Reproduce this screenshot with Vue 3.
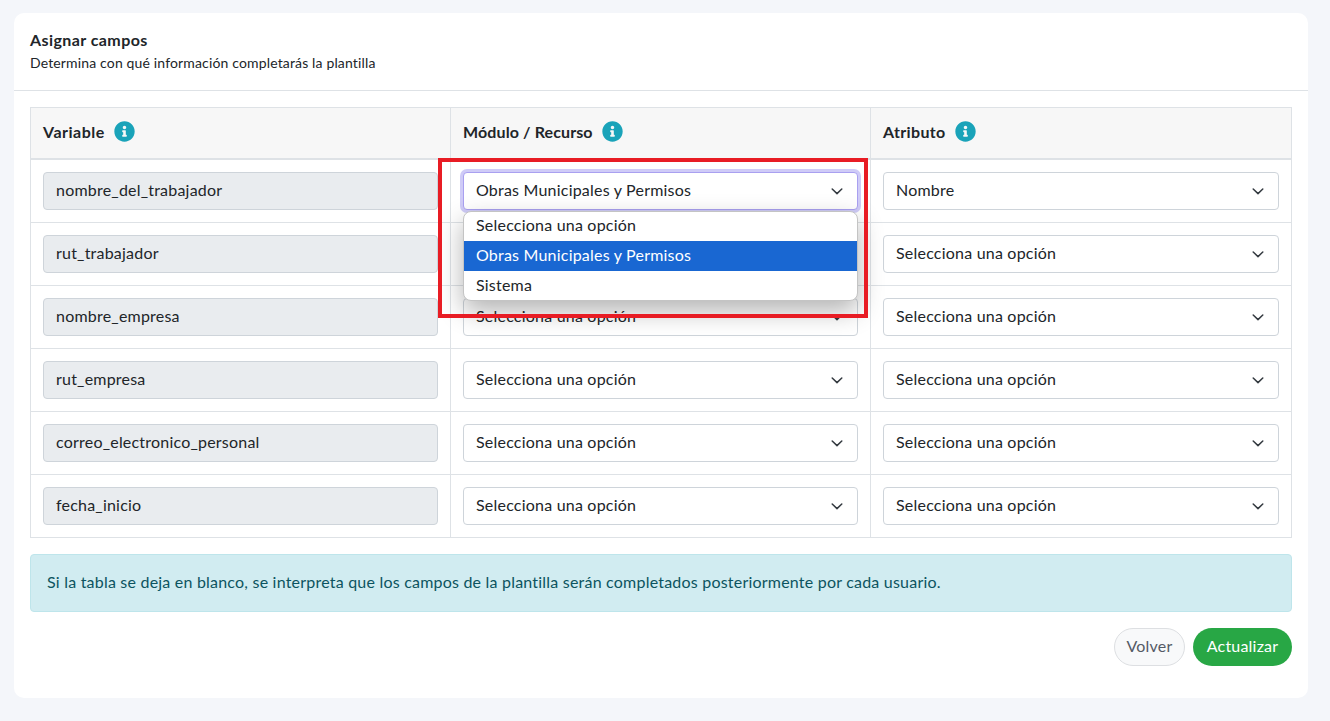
<script setup>
const infoPath = 'M256 8C119.043 8 8 119.083 8 256c0 136.997 111.043 248 248 248s248-111.003 248-248C504 119.083 392.957 8 256 8zm0 110c23.196 0 42 18.804 42 42s-18.804 42-42 42-42-18.804-42-42 18.804-42 42-42zm56 254c0 6.627-5.373 12-12 12h-88c-6.627 0-12-5.373-12-12v-24c0-6.627 5.373-12 12-12h12v-64h-12c-6.627 0-12-5.373-12-12v-24c0-6.627 5.373-12 12-12h64c6.627 0 12 5.373 12 12v100h12c6.627 0 12 5.373 12 12v24z'
const ph = 'Selecciona una opción'
const heads = ['Variable', 'Módulo / Recurso', 'Atributo']
const rows = [
  { v: 'nombre_del_trabajador', m: 'Obras Municipales y Permisos', a: 'Nombre', focus: true },
  { v: 'rut_trabajador', m: ph, a: ph },
  { v: 'nombre_empresa', m: ph, a: ph },
  { v: 'rut_empresa', m: ph, a: ph },
  { v: 'correo_electronico_personal', m: ph, a: ph },
  { v: 'fecha_inicio', m: ph, a: ph },
]
const options = ['Selecciona una opción', 'Obras Municipales y Permisos', 'Sistema']
</script>

<template>
  <div class="page">
    <section class="card">
      <header class="card-head">
        <h1>Asignar campos</h1>
        <p>Determina con qué información completarás la plantilla</p>
      </header>
      <div class="card-body">
        <div class="table">
          <div class="th" v-for="h in heads" :key="h">
            <span>{{ h }}</span>
            <svg class="info" viewBox="0 0 512 512"><path :d="infoPath" /></svg>
          </div>
          <template v-for="r in rows" :key="r.v">
            <div class="td"><div class="field readonly">{{ r.v }}</div></div>
            <div class="td">
              <div class="field select" :class="{ focus: r.focus }">
                <span>{{ r.m }}</span>
                <svg class="chev" viewBox="0 0 16 16"><path d="M3.2 6l4.8 4.6 4.8-4.6" /></svg>
              </div>
            </div>
            <div class="td">
              <div class="field select">
                <span>{{ r.a }}</span>
                <svg class="chev" viewBox="0 0 16 16"><path d="M3.2 6l4.8 4.6 4.8-4.6" /></svg>
              </div>
            </div>
          </template>
        </div>
        <div class="alert">Si la tabla se deja en blanco, se interpreta que los campos de la plantilla serán completados posteriormente por cada usuario.</div>
        <div class="actions">
          <button class="btn back">Volver</button>
          <button class="btn save">Actualizar</button>
        </div>
      </div>
      <ul class="menu">
        <li v-for="(o, i) in options" :key="o" :class="{ active: i === 1 }">{{ o }}</li>
      </ul>
      <div class="mark"></div>
    </section>
  </div>
</template>

<style>
html, body { margin: 0; background: #f4f6fa; }
</style>

<style scoped>
.page {
  box-sizing: border-box;
  height: 721px;
  padding: 13px 22px 0 14px;
  background: #f4f6fa;
  font-family: Lato, "Open Sans", sans-serif;
  color: #212529;
  font-size: 16px;
  letter-spacing: .21px;
}
.card {
  position: relative;
  height: 685px;
  box-sizing: border-box;
  background: #fff;
  border-radius: 10px;
}
.card-head {
  box-sizing: border-box;
  height: 78px;
  padding: 17px 16px 0;
  border-bottom: 1px solid #dee2e6;
}
h1 { margin: 0; font-size: 16px; font-weight: 700; line-height: 20px; letter-spacing: .42px; }
p { margin: 3px 0 0; font-size: 14px; line-height: 19px; letter-spacing: .15px; }
.card-body { padding: 16px 16px 0; }
.table {
  display: grid;
  grid-template-columns: 420px 420px 421px;
  border-top: 1px solid #dee2e6;
  border-left: 1px solid #dee2e6;
}
.th {
  box-sizing: border-box;
  height: 52px;
  display: flex;
  align-items: center;
  gap: 9px;
  padding: 0 12px 3px;
  background: #f7f7f7;
  font-weight: 700;
  letter-spacing: .12px;
  border-right: 1px solid #dee2e6;
  border-bottom: 2px solid #dee2e6;
}
.th:nth-child(1) { letter-spacing: .5px; }
.th:nth-child(3) { letter-spacing: .35px; }
.info { width: 21px; height: 21px; fill: #1aa3b9; }
.td {
  box-sizing: border-box;
  height: 63px;
  padding: 12px;
  border-right: 1px solid #dee2e6;
  border-bottom: 1px solid #dee2e6;
}
.field {
  box-sizing: border-box;
  height: 38px;
  display: flex;
  align-items: center;
  justify-content: space-between;
  padding: 0 12px 3px;
  border: 1px solid #ced4da;
  border-radius: 4px;
  background: #fff;
}
.readonly { background: #e9ecef; }
.focus { border-color: #a9a0f0; box-shadow: 0 0 0 3px #cfcbf7; }
.chev { width: 16px; height: 16px; margin-top: 3px; fill: none; stroke: #343a40; stroke-width: 1.5; stroke-linecap: round; stroke-linejoin: round; }
.alert {
  box-sizing: border-box;
  height: 58px;
  margin-top: 16px;
  padding: 0 16px 3px;
  display: flex;
  align-items: center;
  background: #d1ecf1;
  border: 1px solid #bee5eb;
  border-radius: 4px;
  color: #0c5460;
}
.actions { display: flex; justify-content: flex-end; gap: 8px; margin-top: 16px; }
.btn {
  height: 38px;
  box-sizing: border-box;
  padding: 0 0 3px;
  border-radius: 19px;
  font: inherit;
  letter-spacing: .2px;
  border: 1px solid transparent;
}
.back { width: 71px; background: #f8f9fa; border-color: #dddfe2; color: #555b66; }
.save { width: 99px; background: #28a745; color: #fff; }
.menu {
  position: absolute;
  left: 449px;
  top: 198px;
  width: 395px;
  height: 90px;
  margin: 0;
  padding: 0;
  box-sizing: border-box;
  list-style: none;
  background: #fff;
  border-radius: 8px;
  overflow: hidden;
  border: 1px solid #c4c4c4;
  box-shadow: 0 10px 26px rgba(0, 0, 0, .3);
}
.menu li { height: 30px; line-height: 28px; padding: 0 12px; }
.menu li:first-child { height: 29px; line-height: 26px; }
.menu li:last-child { height: 29px; }
.menu li.active { background: #1967d2; color: #fff; }
.mark {
  position: absolute;
  left: 424px;
  top: 145px;
  width: 430px;
  height: 160px;
  box-sizing: border-box;
  border: 4px solid #e81c24;
  pointer-events: none;
}
</style>
